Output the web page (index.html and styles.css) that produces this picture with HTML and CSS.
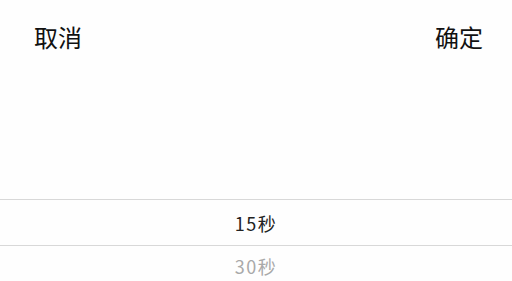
FILE: index.html
```html
<!DOCTYPE html>
<html>
<head>
<meta charset="utf-8">
<link rel="stylesheet" href="styles.css">
</head>
<body>
<div class="sheet">
  <div class="toolbar">
    <span class="btn">取消</span>
    <span class="btn">确定</span>
  </div>
  <div class="picker">
    <div class="item"></div>
    <div class="item selected">15秒</div>
    <div class="item faded">30秒</div>
  </div>
</div>
</body>
</html>
```
FILE: styles.css
```css
html, body {
  margin: 0;
  padding: 0;
  background: #fefefe;
}
.sheet {
  width: 512px;
  height: 281px;
  overflow: hidden;
  font-family: "Noto Sans CJK SC", "Noto Sans", sans-serif;
}
.toolbar {
  display: flex;
  justify-content: space-between;
  align-items: center;
  height: 74px;
  padding: 0 29px 0 34px;
}
.btn {
  font-size: 24px;
  color: #111;
  line-height: 1;
}
.picker {
  display: flex;
  flex-direction: column;
  padding-top: 80px;
}
.item {
  height: 45px;
  display: flex;
  align-items: center;
  justify-content: center;
  font-size: 18px;
  letter-spacing: 1.5px;
  color: #222;
}
.item.selected {
  border-top: 1px solid #d8d8d8;
  border-bottom: 1px solid #d8d8d8;
}
.item.faded {
  height: 40px;
  color: #a9a9a9;
}
```
